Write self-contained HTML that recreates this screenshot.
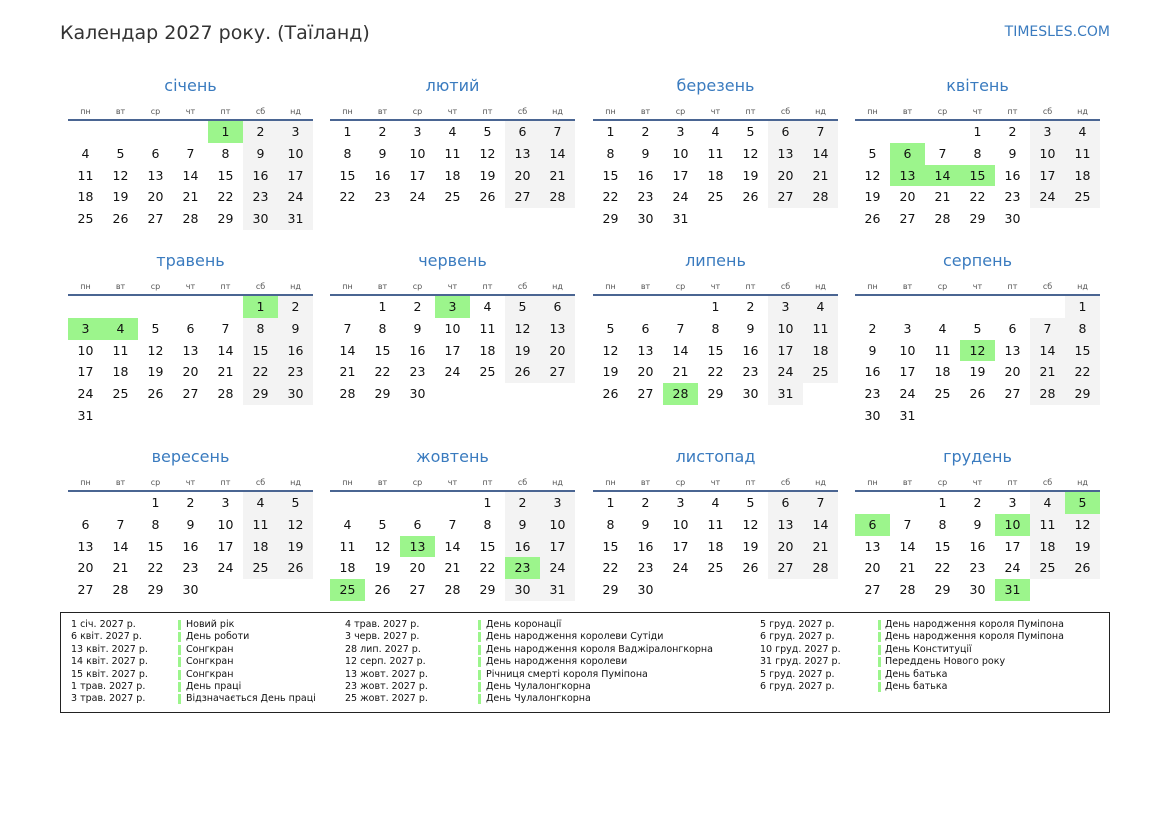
<!DOCTYPE html>
<html><head><meta charset="utf-8"><style>
body{margin:0;width:1169px;height:827px;background:#fff;position:relative;font-family:"DejaVu Sans","Liberation Sans",sans-serif;overflow:hidden}
.a{position:absolute}
.t{left:60px;top:22px;font-size:19px;color:#333}
.logo{right:59px;top:24px;font-size:14px;color:#3a7bbf}
.mn{font-size:16px;color:#3a7bbf;text-align:center;width:245px}
.wd{font-size:8px;color:#555;text-align:center;width:35px}
.ln{height:2px;background:#4a6592;width:245px}
.c{width:35px;height:21.75px;line-height:22px;text-align:center;font-size:12.5px;color:#111}
.we{background:#f3f3f3}
.h{background:#9cf58c}
.box{left:60px;top:612px;width:1048px;height:99px;border:1px solid #222}
.lg{font-size:9.5px;color:#111;line-height:12.4px;white-space:pre}
.bar{width:3px;background:#9cf58c;height:10px}
</style></head><body>
<div class="a t">Календар 2027 року. (Таїланд)</div>
<div class="a logo">TIMESLES.COM</div>
<div class="a box"></div>
<div id="r"></div>
<script>
const names=["січень","лютий","березень","квітень","травень","червень","липень","серпень","вересень","жовтень","листопад","грудень"];
const wd=["пн","вт","ср","чт","пт","сб","нд"];
const hol={0:[1],3:[6,13,14,15],4:[1,3,4],5:[3],6:[28],7:[12],9:[13,23,25],11:[5,6,10,31]};
const cx=[68,330,593,855],ly=[121,296,492];
let h="";
for(let m=0;m<12;m++){
 const x=cx[m%4],y=ly[Math.floor(m/4)];
 h+=`<div class="a mn" style="left:${x}px;top:${y-45}px">${names[m]}</div>`;
 wd.forEach((w,i)=>h+=`<div class="a wd" style="left:${x+i*35}px;top:${y-14}px">${w}</div>`);
 h+=`<div class="a ln" style="left:${x}px;top:${y-2}px"></div>`;
 const first=(new Date(2027,m,1).getDay()+6)%7;
 const n=new Date(2027,m+1,0).getDate();
 for(let d=1;d<=n;d++){
  const p=first+d-1,col=p%7,row=Math.floor(p/7);
  let cl="c";
  if(hol[m]&&hol[m].includes(d))cl+=" h";else if(col>=5)cl+=" we";
  h+=`<div class="a ${cl}" style="left:${x+col*35}px;top:${y+row*21.75}px">${d}</div>`;
 }
}
const L=[
[71,178,186,[["1 січ. 2027 р.","Новий рік"],["6 квіт. 2027 р.","День роботи"],["13 квіт. 2027 р.","Сонгкран"],["14 квіт. 2027 р.","Сонгкран"],["15 квіт. 2027 р.","Сонгкран"],["1 трав. 2027 р.","День праці"],["3 трав. 2027 р.","Відзначається День праці"]]],
[345,478,486,[["4 трав. 2027 р.","День коронації"],["3 черв. 2027 р.","День народження королеви Сутіди"],["28 лип. 2027 р.","День народження короля Ваджіралонгкорна"],["12 серп. 2027 р.","День народження королеви"],["13 жовт. 2027 р.","Річниця смерті короля Пуміпона"],["23 жовт. 2027 р.","День Чулалонгкорна"],["25 жовт. 2027 р.","День Чулалонгкорна"]]],
[760,878,885,[["5 груд. 2027 р.","День народження короля Пуміпона"],["6 груд. 2027 р.","День народження короля Пуміпона"],["10 груд. 2027 р.","День Конституції"],["31 груд. 2027 р.","Переддень Нового року"],["5 груд. 2027 р.","День батька"],["6 груд. 2027 р.","День батька"]]]];
L.forEach(([a,b,c,rows])=>rows.forEach((r,i)=>{const y=619+i*12.4;
 h+=`<div class="a lg" style="left:${a}px;top:${y}px">${r[0]}</div><div class="a bar" style="left:${b}px;top:${y+1}px"></div><div class="a lg" style="left:${c}px;top:${y}px">${r[1]}</div>`;}));
document.getElementById("r").innerHTML=h;
</script>
</body></html>
